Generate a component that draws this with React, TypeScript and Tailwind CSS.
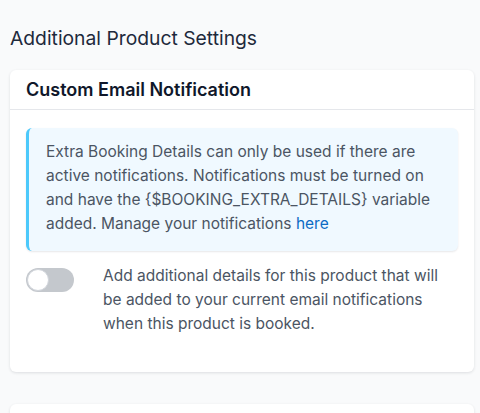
export default function App() {
  return (
    <div
      className="h-[413px] overflow-hidden bg-[#f9fafb] px-[10px] pt-[24px]"
      style={{ fontFamily: "Inter, 'Noto Sans', sans-serif" }}
    >
      <h1 className="text-[19.3px] leading-[28px] text-[#1e293b]">Additional Product Settings</h1>

      <section className="mt-[18px] w-[464px] rounded-md bg-white shadow-[0_1px_3px_rgba(15,23,42,0.12)]">
        <div className="flex h-[40px] items-center border-b border-[#e5e7eb] px-4">
          <h2 className="text-[18px] font-semibold text-[#0f172a]">Custom Email Notification</h2>
        </div>

        <div className="px-4 pb-[36px] pt-[18px]">
          <div className="rounded-md border-l-[3px] border-[#4cc9fb] bg-[#f0f9ff] pb-[15px] pl-[17px] pr-3 pt-3 text-[15.5px] leading-[24px] text-[#4b5563] shadow-[0_1px_2px_rgba(15,23,42,0.1)]">
            Extra Booking Details can only be used if there are active notifications. Notifications must
            be turned on and have the {"{$BOOKING_EXTRA_DETAILS}"} variable added. Manage your
            notifications <a href="#" className="text-[#0b6bc4]">here</a>
          </div>

          <div className="mt-[13px] flex gap-[29px]">
            <button
              type="button"
              aria-pressed="false"
              className="mt-1 flex h-6 w-12 shrink-0 items-center rounded-full bg-[#c4c8cd] p-[1px]"
            >
              <span className="h-[22px] w-[22px] rounded-full border border-[#d1d5db] bg-white" />
            </button>
            <p className="pr-2 text-[15.5px] leading-[24px] text-[#4b5563]">
              Add additional details for this product that will be added to your current email
              notifications when this product is booked.
            </p>
          </div>
        </div>
      </section>

      <section className="mt-[32px] h-[40px] w-[464px] rounded-md bg-white shadow-[0_1px_3px_rgba(15,23,42,0.12)]" />
    </div>
  );
}
